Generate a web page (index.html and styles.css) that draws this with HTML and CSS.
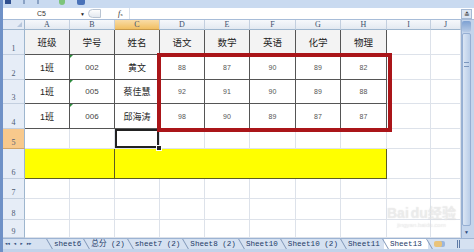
FILE: index.html
```html
<!DOCTYPE html>
<html lang="zh-CN">
<head>
    <meta charset="UTF-8">
    <title>成绩表 - Sheet13</title>
    <link rel="stylesheet" href="styles.css">
</head>
<body>
<div class="app">
    <div class="quick">
        <span class="qi save"></span>
        <span class="qi bar"></span>
        <span class="qi bar"></span>
        <span class="qi ball"></span>
        <span class="qi pic"></span>
    </div>

    <div class="formula">
        <div class="namebox">C5</div>
        <span class="drop">&#9660;</span>
        <span class="knob"></span>
        <span class="fx"><i>f</i><small>x</small></span>
        <div class="input"></div>
        <span class="expand">&#8795;</span>
    </div>

    <div class="main">
        <div class="sheet">
            <div class="corner"></div>
            <div class="ch">A</div><div class="ch">B</div><div class="ch on">C</div><div class="ch">D</div><div class="ch">E</div>
            <div class="ch">F</div><div class="ch">G</div><div class="ch">H</div><div class="ch">I</div><div class="ch">J</div>

            <div class="rh">1</div>
            <div class="c b th">班级</div><div class="c b th">学号</div><div class="c b th">姓名</div><div class="c b th">语文</div>
            <div class="c b th">数学</div><div class="c b th">英语</div><div class="c b th">化学</div><div class="c b th">物理</div>
            <div class="c"></div><div class="c"></div>

            <div class="rh">2</div>
            <div class="c b">1班</div><div class="c b id tri">002</div><div class="c b">黄文</div>
            <div class="c b n">88</div><div class="c b n">87</div><div class="c b n">90</div><div class="c b n">89</div><div class="c b n">82</div>
            <div class="c"></div><div class="c"></div>

            <div class="rh">3</div>
            <div class="c b">1班</div><div class="c b id tri">005</div><div class="c b">蔡佳慧</div>
            <div class="c b n">92</div><div class="c b n">91</div><div class="c b n">90</div><div class="c b n">89</div><div class="c b n">88</div>
            <div class="c"></div><div class="c"></div>

            <div class="rh">4</div>
            <div class="c b">1班</div><div class="c b id tri">006</div><div class="c b">邱海涛</div>
            <div class="c b n">98</div><div class="c b n">90</div><div class="c b n">89</div><div class="c b n">87</div><div class="c b n">87</div>
            <div class="c"></div><div class="c"></div>

            <div class="rh on">5</div>
            <div class="c"></div><div class="c"></div><div class="c sel"></div><div class="c"></div><div class="c"></div>
            <div class="c"></div><div class="c"></div><div class="c"></div><div class="c"></div><div class="c"></div>

            <div class="rh">6</div>
            <div class="c y span2"></div><div class="c y span6"></div>
            <div class="c"></div><div class="c"></div>

            <div class="rh">7</div>
            <div class="c"></div><div class="c"></div><div class="c"></div><div class="c"></div><div class="c"></div>
            <div class="c"></div><div class="c"></div><div class="c"></div><div class="c"></div><div class="c"></div>

            <div class="rh">8</div>
            <div class="c"></div><div class="c"></div><div class="c"></div><div class="c"></div><div class="c"></div>
            <div class="c"></div><div class="c"></div><div class="c"></div><div class="c"></div><div class="c"></div>

            <div class="rh">9</div>
            <div class="c"></div><div class="c"></div><div class="c"></div><div class="c"></div><div class="c"></div>
            <div class="c"></div><div class="c"></div><div class="c"></div><div class="c"></div><div class="c"></div>
        </div>

        <div class="vscroll">
            <div class="vbtn top"></div>
            <div class="thumb"><span class="grip"></span></div>
            <div class="vbtn down">&#9660;</div>
        </div>
    </div>

    <div class="tabs">
        <div class="nav">
            <span>&#9668;&#9668;</span><span>&#9668;</span><span>&#9658;</span><span>&#9658;&#9658;</span>
        </div>
        <span class="tab">sheet6</span>
        <span class="tab">总分 (2)</span>
        <span class="tab">sheet7 (2)</span>
        <span class="tab">Sheet8 (2)</span>
        <span class="tab">Sheet10</span>
        <span class="tab">Sheet10 (2)</span>
        <span class="tab">Sheet11</span>
        <span class="tab active">Sheet13</span>
        <span class="tab add"><span class="addicon"></span></span>
        <span class="split"></span>
    </div>
    <div class="hstrip"></div>

    <div class="redbox"></div>

    <div class="watermark">
        <div class="mark">Bai<span class="du">du</span>经验</div>
        <div class="url">jingyan.baidu.com</div>
    </div>
</div>
</body>
</html>
```

FILE: styles.css
```css
* {
    box-sizing: border-box;
}
body {
    margin: 0;
    width: 474px;
    height: 252px;
    overflow: hidden;
    font-family: "Liberation Sans", "Noto Sans CJK SC", sans-serif;
    background: #c6d7ee;
}
.app {
    position: relative;
    width: 474px;
    height: 252px;
    border-left: 3px solid #6f91c7;
}

/* quick access strip */
.quick {
    height: 8px;
    background: #c9daf0;
    display: flex;
    align-items: flex-start;
    gap: 12px;
    padding-left: 2px;
}
.qi {
    display: block;
    height: 4px;
}
.save {
    width: 6px;
    background: #2f4f8f;
}
.bar {
    width: 2px;
    background: #8aa2c4;
}
.ball {
    width: 6px;
    height: 5px;
    margin-left: 8px;
    border-radius: 0 0 3px 3px;
    background: #7cc47a;
}
.pic {
    width: 8px;
    height: 5px;
    background: #4a72b8;
    border-radius: 0 0 2px 2px;
}

/* formula bar */
.formula {
    height: 12px;
    display: flex;
    align-items: center;
    background: #fff;
    border-bottom: 1px solid #a7bcd8;
}
.namebox {
    width: 77px;
    text-align: center;
    font-size: 7px;
    color: #333;
}
.drop {
    width: 7px;
    font-size: 5px;
    color: #222;
}
.knob {
    width: 13px;
    height: 9px;
    margin-left: 1px;
    border: 1px solid #b9c4d2;
    border-radius: 5px 0 0 5px;
    background: linear-gradient(#fdfdfd, #e3e8ef);
}
.fx {
    margin-left: 17px;
    font-family: "Liberation Serif", serif;
    font-size: 8px;
    color: #333;
}
.fx small {
    font-size: 5px;
}
.input {
    flex: 1;
    height: 100%;
    margin-left: 6px;
    border-left: 1px solid #d9e1ec;
}
.expand {
    width: 11px;
    height: 10px;
    font-size: 7px;
    line-height: 10px;
    text-align: center;
    color: #333;
    background: #dce6f3;
    border: 1px solid #a5b9d4;
    margin-right: 2px;
}

/* sheet grid */
.main {
    display: flex;
    height: 218px;
}
.sheet {
    width: 458px;
    display: grid;
    grid-template-columns: 22px 45px 45px 45px 45px 45px 46px 45px 46px 44px 30px;
    grid-template-rows: 10px 25px 25px 24px 25px 20px 30px 20px 21px 18px;
    background: #fff;
}
.corner {
    background: #e4ebf5;
    border-right: 1px solid #9eb6ce;
    border-bottom: 1px solid #9eb6ce;
    position: relative;
}
.corner::after {
    content: "";
    position: absolute;
    right: 2px;
    bottom: 2px;
    border-left: 5px solid transparent;
    border-bottom: 5px solid #b6c6dc;
}
.ch {
    background: linear-gradient(#f6f8fb, #e3e9f1);
    border-right: 1px solid #c3cfdf;
    border-bottom: 1px solid #9eb6ce;
    font-family: "Liberation Serif", serif;
    font-size: 8px;
    line-height: 9px;
    text-align: center;
    color: #3d4f6c;
}
.ch.on {
    background: linear-gradient(#f9dca6, #f1bf62);
    border-bottom-color: #c89a4b;
}
.rh {
    background: #e6edf7;
    border-right: 1px solid #9eb6ce;
    border-bottom: 1px solid #c3cfdf;
    display: flex;
    align-items: flex-end;
    justify-content: center;
    padding-bottom: 1px;
    font-family: "Liberation Serif", serif;
    font-size: 8px;
    color: #4c5b73;
}
.rh.on {
    background: #f8c98c;
    border-bottom-color: #d3a466;
}
.c {
    position: relative;
    border-right: 1px solid #dde2ea;
    border-bottom: 1px solid #dde2ea;
    display: flex;
    align-items: center;
    justify-content: center;
    font-size: 9px;
    color: #222;
}
.b {
    border-right-color: #555;
    border-bottom-color: #555;
}
.th {
    background: #f3f3f3;
    font-size: 9.5px;
}
.id {
    font-size: 8px;
    color: #444;
}
.n {
    font-size: 7px;
    color: #555;
}
.tri::before {
    content: "";
    position: absolute;
    left: 0;
    top: 0;
    border-top: 3px solid #2b8c3c;
    border-right: 3px solid transparent;
}
.sel {
    box-shadow: inset 0 0 0 2px #222;
}
.sel::after {
    content: "";
    position: absolute;
    right: -3px;
    bottom: -3px;
    width: 4px;
    height: 4px;
    background: #222;
    border: 1px solid #fff;
    z-index: 1;
}
.y {
    background: #ffff00;
    border-right-color: #5b5b24;
    border-bottom-color: #5b5b24;
}
.span2 {
    grid-column: span 2;
}
.span6 {
    grid-column: span 6;
}

/* vertical scrollbar */
.vscroll {
    width: 13px;
    display: flex;
    flex-direction: column;
    background: #c4d5ec;
    border-left: 1px solid #9bb3d4;
    padding-right: 3px;
}
.vbtn {
    height: 11px;
    font-size: 5px;
    line-height: 11px;
    text-align: center;
    color: #2a4a7c;
}
.vbtn.top {
    background: linear-gradient(#7ea1d2, #b7cbe6);
    border-radius: 2px;
    margin-top: 1px;
}
.thumb {
    flex: 1;
    margin: 1px 0;
    background: linear-gradient(90deg, #dbe6f4, #b9cde8);
    border: 1px solid #96afd3;
    border-radius: 2px;
    display: flex;
    align-items: flex-start;
    justify-content: center;
    padding-top: 28px;
}
.grip {
    width: 5px;
    height: 5px;
    border-top: 1px solid #7b96bd;
    border-bottom: 1px solid #7b96bd;
}
.vbtn.down {
    margin-top: auto;
}

/* sheet tabs */
.tabs {
    height: 11px;
    display: flex;
    align-items: center;
    background: #d5e1f1;
    border-top: 1px solid #9cb3d3;
    font-family: "Liberation Mono", "Noto Sans CJK SC", monospace;
    font-size: 7.6px;
    color: #1d3966;
    white-space: nowrap;
}
.nav {
    width: 45px;
    display: flex;
    gap: 4px;
    padding-left: 2px;
    font-size: 4px;
    color: #2c4a7a;
}
.tab {
    position: relative;
    height: 10px;
    line-height: 10px;
    padding: 0 4px 0 6px;
}
.tab::before {
    content: "";
    position: absolute;
    left: 1px;
    top: 0;
    bottom: 0;
    border-left: 1px solid #7f96b8;
    transform: skewX(30deg);
}
.tab.active {
    background: #fff;
    padding-right: 6px;
}
.tab.add {
    width: 20px;
    padding: 0 0 0 6px;
}
.addicon {
    display: inline-block;
    width: 8px;
    height: 6px;
    margin-top: 2px;
    background: #e9c37a;
    border-radius: 2px;
    box-shadow: 3px 0 0 #9bb6dd;
}
.split {
    width: 3px;
    height: 8px;
    margin-left: 9px;
    border-left: 1px solid #5e7aa6;
    border-right: 1px solid #5e7aa6;
}
.hstrip {
    height: 3px;
    background: #c2d3ea;
}

/* overlays */
.redbox {
    position: absolute;
    left: 154px;
    top: 53px;
    width: 235px;
    height: 79px;
    border: 4px solid #aa1519;
}
.watermark {
    position: absolute;
    left: 384px;
    top: 205px;
    color: rgba(250, 250, 250, 0.5);
    text-shadow: 0 0 1px rgba(170, 170, 170, 0.45);
    text-align: center;
}
.mark {
    font-size: 14px;
    font-weight: bold;
    line-height: 16px;
}
.du {
    margin-left: 2px;
}
.url {
    font-size: 6px;
    line-height: 8px;
}
```
